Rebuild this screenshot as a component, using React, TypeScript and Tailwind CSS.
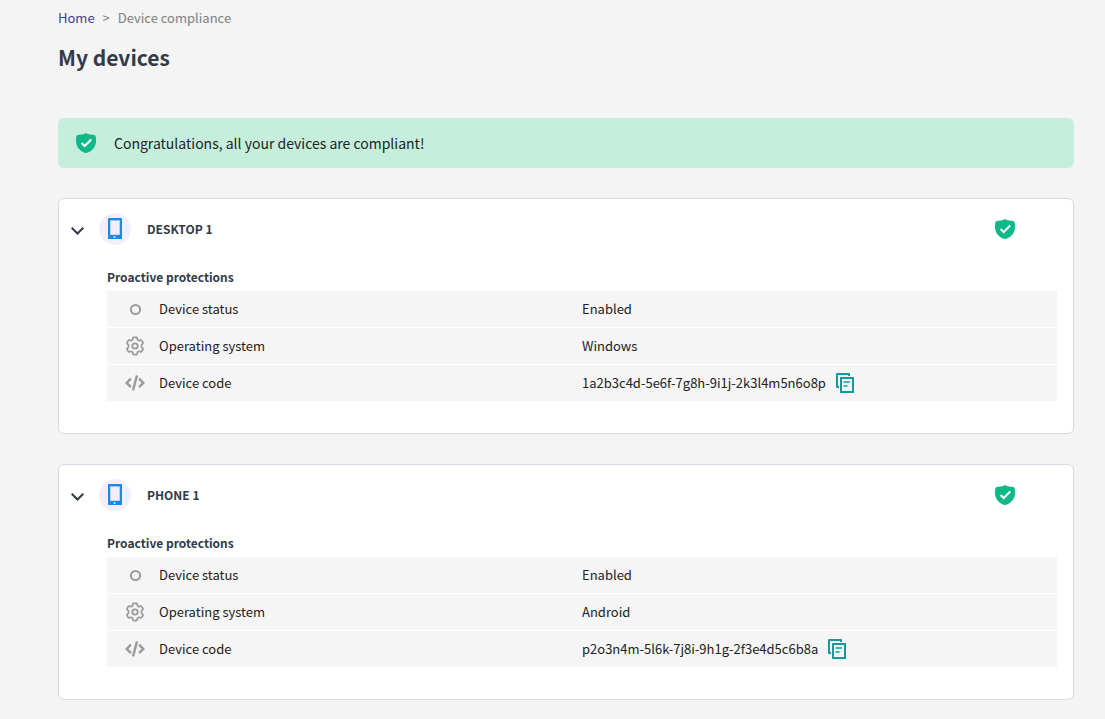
import { useState } from "react";
import type { ReactNode } from "react";

type Device = {
  name: string;
  system: string;
  code: string;
};

const devices: Device[] = [
  { name: "DESKTOP 1", system: "Windows", code: "1a2b3c4d-5e6f-7g8h-9i1j-2k3l4m5n6o8p" },
  { name: "PHONE 1", system: "Android", code: "p2o3n4m-5l6k-7j8i-9h1g-2f3e4d5c6b8a" },
];

function ShieldIcon() {
  return (
    <svg viewBox="0 0 20 20" className="size-5 shrink-0" aria-hidden="true">
      <path
        d="M10 0C11.600 1.200 13.600 1.700 16 1.700C17.500 1.700 18.700 2 19.300 2.500C19.900 4 20 6 20 8.200C20 14 15.800 18.600 10 20C4.200 18.600 0 14 0 8.200C0 6 .1 4 .7 2.500C1.300 2 2.500 1.700 4 1.700C6.400 1.700 8.400 1.200 10 0Z"
        fill="#0fb888"
      />
      <path d="M5.600 10.100L8.700 13.100L15.200 6.600" fill="none" stroke="#fff" strokeWidth="2.100" />
    </svg>
  );
}

function ChevronIcon({ open }: { open: boolean }) {
  return (
    <svg viewBox="0 0 14 14" className={open ? "size-3.5" : "size-3.5 -rotate-90"} aria-hidden="true">
      <path d="M.7 4.700L6.500 10.500L12.300 4.700" fill="none" stroke="#323b47" strokeWidth="2" />
    </svg>
  );
}

function DeviceIcon() {
  return (
    <svg viewBox="0 0 14 21" className="h-[21px] w-3.5" aria-hidden="true">
      <rect width="14" height="21" rx=".6" fill="#1e88e5" />
      <rect x="2" y="2" width="10" height="15" fill="#90c5f3" />
      <rect x="2.600" y="3" width="8.800" height="13.500" fill="#f3effa" />
      <circle cx="6.500" cy="19" r="1" fill="#d5e9fb" />
    </svg>
  );
}

function StatusIcon() {
  return (
    <svg viewBox="0 0 20 20" className="size-5" aria-hidden="true">
      <circle cx="10.500" cy="10.500" r="4.600" fill="none" stroke="#9b9b9b" strokeWidth="2" />
    </svg>
  );
}

function GearIcon() {
  return (
    <svg viewBox="0 0 20 20" className="size-5" fill="none" stroke="#9b9b9b" aria-hidden="true">
      <path
        d="M8.600 1.300H11.400Q12 1.300 12.100 2L12.400 3.700L14 4.700L15.700 4.100Q16.300 3.900 16.600 4.400L18 6.800Q18.300 7.300 17.800 7.700L16.500 8.900V11.100L17.800 12.300Q18.300 12.700 18 13.200L16.600 15.600Q16.300 16.100 15.700 15.900L14 15.300L12.400 16.300L12.100 18Q12 18.700 11.400 18.700H8.600Q8 18.700 7.900 18L7.600 16.300L6 15.300L4.300 15.900Q3.700 16.100 3.400 15.600L2 13.200Q1.700 12.700 2.200 12.300L3.500 11.100V8.900L2.200 7.700Q1.700 7.300 2 6.800L3.400 4.400Q3.700 3.900 4.300 4.100L6 4.700L7.600 3.700L7.900 2Q8 1.300 8.600 1.300Z"
        strokeWidth="1.700"
        strokeLinejoin="round"
      />
      <circle cx="10" cy="10" r="2.700" strokeWidth="1.800" />
    </svg>
  );
}

function CodeIcon() {
  return (
    <svg viewBox="0 0 20 20" className="size-5" fill="none" stroke="#9b9b9b" strokeWidth="2.400" aria-hidden="true">
      <path d="M5.900 5.600L1.700 9.900L5.900 14.200M14.100 5.600L18.300 9.900L14.100 14.200" />
      <path d="M12 2.400L8 17.400" />
    </svg>
  );
}

function CopyIcon() {
  return (
    <svg viewBox="0 0 18 20" className="h-5 w-[18px]" fill="none" stroke="#159a9c" strokeWidth="2" aria-hidden="true">
      <path d="M3 14H1V1H13V3" strokeLinejoin="round" />
      <path d="M5 5H17V19H5Z" />
      <path d="M7.500 9H14M7.500 13H11.500" strokeWidth="1.700" />
    </svg>
  );
}

function Row({ icon, label, children }: { icon: ReactNode; label: string; children: ReactNode }) {
  return (
    <tr className="group">
      <th scope="row" className="w-1/2 border-white p-0 text-left font-normal group-not-last:border-b">
        <span className="flex h-9 items-center gap-3.5 pl-[18px]">
          {icon}
          {label}
        </span>
      </th>
      <td className="border-white p-0 group-not-last:border-b">
        <span className="flex h-9 items-center gap-2.5">{children}</span>
      </td>
    </tr>
  );
}

function DeviceCard({ device }: { device: Device }) {
  const [open, setOpen] = useState(true);
  return (
    <section className="rounded-md border border-[#d9d8e4] bg-white">
      <header className="flex items-center pt-3.5 pr-[58px] pl-3">
        <button
          type="button"
          aria-expanded={open}
          aria-label={"Toggle details of " + device.name}
          className="pt-0.5"
          onClick={() => setOpen(!open)}
        >
          <ChevronIcon open={open} />
        </button>
        <span className="ml-3.5 flex size-8 items-center justify-center rounded-full bg-[#f3effa] pb-px">
          <DeviceIcon />
        </span>
        <h2 className="ml-4 flex-1 text-[12px] leading-5 font-bold text-[#323b47]">{device.name}</h2>
        <ShieldIcon />
      </header>
      {open && (
        <div className="pt-[22px] pr-4 pb-8 pl-12">
          <h3 className="pb-1 text-[12px] leading-5 font-bold text-[#323b47]">Proactive protections</h3>
          <table className="w-full table-fixed border-separate border-spacing-0 bg-[#f5f5f5] text-[13px] leading-5 text-[#222]">
            <tbody>
              <Row icon={<StatusIcon />} label="Device status">
                Enabled
              </Row>
              <Row icon={<GearIcon />} label="Operating system">
                {device.system}
              </Row>
              <Row icon={<CodeIcon />} label="Device code">
                {device.code}
                <button
                  type="button"
                  aria-label="Copy device code"
                  onClick={() => navigator.clipboard?.writeText(device.code)}
                >
                  <CopyIcon />
                </button>
              </Row>
            </tbody>
          </table>
        </div>
      )}
    </section>
  );
}

export default function App() {
  return (
    <main className="min-h-screen bg-[#f4f4f4] pt-2 pr-[31px] pb-5 pl-[58px] font-['Noto_Sans_CJK_SC',sans-serif]">
      <nav aria-label="Breadcrumb" className="flex gap-2 text-[13px] leading-5 text-[#808080]">
        <a href="#home" className="text-[#3d3d94]">
          Home
        </a>
        <span aria-hidden="true">&gt;</span>
        <span>Device compliance</span>
      </nav>
      <h1 className="mt-[13px] text-[21px] leading-8 font-bold text-[#323b47]">My devices</h1>
      <div className="mt-[45px] flex h-[50px] items-center gap-[18px] rounded-md bg-[#c5efdc] px-[18px] text-sm text-[#222]">
        <ShieldIcon />
        <p>Congratulations, all your devices are compliant!</p>
      </div>
      <div className="mt-[30px] flex flex-col gap-[30px]">
        {devices.map((device) => (
          <DeviceCard key={device.name} device={device} />
        ))}
      </div>
    </main>
  );
}
